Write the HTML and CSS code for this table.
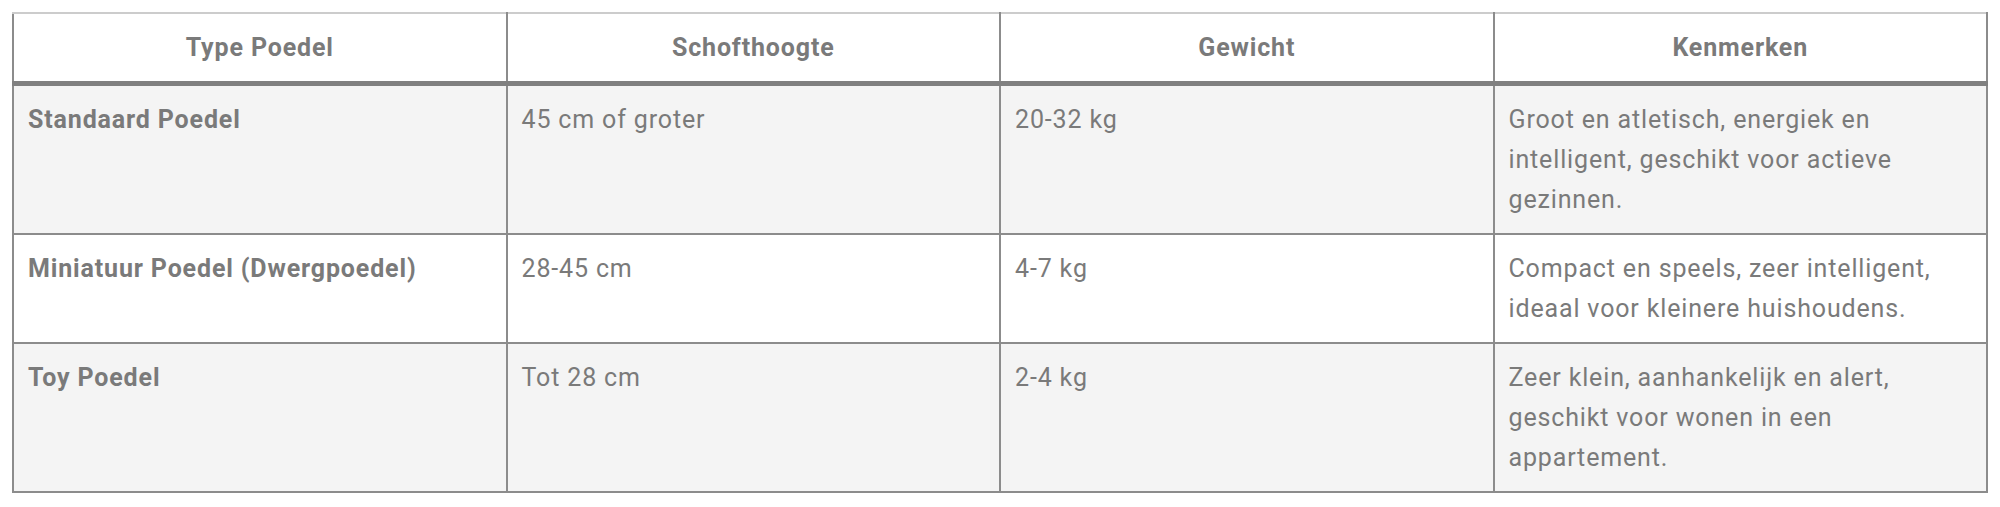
FILE: index.html
```html
<!DOCTYPE html>
<html lang="nl">
<head>
<meta charset="utf-8">
<title>Poedel types</title>
<link rel="stylesheet" href="styles.css">
</head>
<body>
<table class="poodle-table">
  <thead>
    <tr>
      <th>Type Poedel</th>
      <th>Schofthoogte</th>
      <th>Gewicht</th>
      <th>Kenmerken</th>
    </tr>
  </thead>
  <tbody>
    <tr class="odd">
      <td><strong>Standaard Poedel</strong></td>
      <td>45 cm of groter</td>
      <td>20-32 kg</td>
      <td>Groot en atletisch, energiek en intelligent, geschikt voor actieve gezinnen.</td>
    </tr>
    <tr>
      <td><strong>Miniatuur Poedel (Dwergpoedel)</strong></td>
      <td>28-45 cm</td>
      <td>4-7 kg</td>
      <td>Compact en speels, zeer intelligent, ideaal voor kleinere huishoudens.</td>
    </tr>
    <tr class="odd">
      <td><strong>Toy Poedel</strong></td>
      <td>Tot 28 cm</td>
      <td>2-4 kg</td>
      <td>Zeer klein, aanhankelijk en alert, geschikt voor wonen in een appartement.</td>
    </tr>
  </tbody>
</table>
</body>
</html>
```
FILE: styles.css
```css
html, body {
  margin: 0;
  padding: 0;
  background: #ffffff;
}
body {
  padding: 12px 12px 0 12px;
  font-family: Roboto, "Liberation Sans", sans-serif;
  font-size: 25px;
  line-height: 40px;
  letter-spacing: 0.85px;
  color: #7a7a7a;
}
.poodle-table {
  width: 100%;
  table-layout: fixed;
  border-collapse: collapse;
  border-spacing: 0;
}
.poodle-table th,
.poodle-table td {
  border: 2px solid #8c8c8c;
  padding: 14px 14px 13px 14px;
  vertical-align: top;
  text-align: left;
}
.poodle-table th {
  text-align: center;
  font-weight: 700;
  border-top: 2px solid #cccccc;
  border-bottom: 5px solid #808080;
}
.poodle-table strong {
  font-weight: 700;
}
.poodle-table tr.odd td {
  background: #f4f4f4;
}
```
